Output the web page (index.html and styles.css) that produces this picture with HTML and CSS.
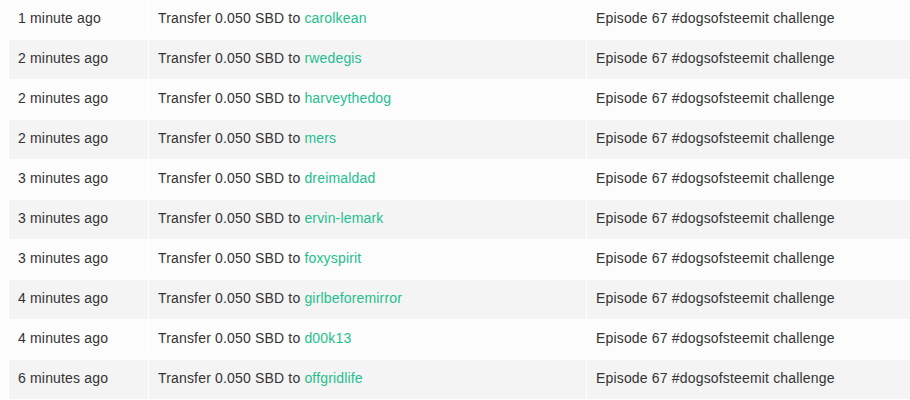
FILE: index.html
```html
<!DOCTYPE html>
<html lang="en">
<head>
    <meta charset="UTF-8">
    <title>Transfers</title>
    <link rel="stylesheet" href="styles.css">
</head>
<body>
    <table class="transfers">
        <tbody>
            <tr><td class="when">1 minute ago</td><td class="what">Transfer 0.050 SBD to <a href="#">carolkean</a></td><td class="memo">Episode 67 #dogsofsteemit challenge</td></tr>
            <tr><td class="when">2 minutes ago</td><td class="what">Transfer 0.050 SBD to <a href="#">rwedegis</a></td><td class="memo">Episode 67 #dogsofsteemit challenge</td></tr>
            <tr><td class="when">2 minutes ago</td><td class="what">Transfer 0.050 SBD to <a href="#">harveythedog</a></td><td class="memo">Episode 67 #dogsofsteemit challenge</td></tr>
            <tr><td class="when">2 minutes ago</td><td class="what">Transfer 0.050 SBD to <a href="#">mers</a></td><td class="memo">Episode 67 #dogsofsteemit challenge</td></tr>
            <tr><td class="when">3 minutes ago</td><td class="what">Transfer 0.050 SBD to <a href="#">dreimaldad</a></td><td class="memo">Episode 67 #dogsofsteemit challenge</td></tr>
            <tr><td class="when">3 minutes ago</td><td class="what">Transfer 0.050 SBD to <a href="#">ervin-lemark</a></td><td class="memo">Episode 67 #dogsofsteemit challenge</td></tr>
            <tr><td class="when">3 minutes ago</td><td class="what">Transfer 0.050 SBD to <a href="#">foxyspirit</a></td><td class="memo">Episode 67 #dogsofsteemit challenge</td></tr>
            <tr><td class="when">4 minutes ago</td><td class="what">Transfer 0.050 SBD to <a href="#">girlbeforemirror</a></td><td class="memo">Episode 67 #dogsofsteemit challenge</td></tr>
            <tr><td class="when">4 minutes ago</td><td class="what">Transfer 0.050 SBD to <a href="#">d00k13</a></td><td class="memo">Episode 67 #dogsofsteemit challenge</td></tr>
            <tr><td class="when">6 minutes ago</td><td class="what">Transfer 0.050 SBD to <a href="#">offgridlife</a></td><td class="memo">Episode 67 #dogsofsteemit challenge</td></tr>
        </tbody>
    </table>
</body>
</html>
```

FILE: styles.css
```css
body {
    margin: 0;
    background: #fcfcfc;
    font-family: 'Liberation Sans', Arial, sans-serif;
    font-size: 14px;
    letter-spacing: 0.17px;
    color: #333;
    overflow: hidden;
}
.transfers {
    margin-left: 8px;
    border-collapse: collapse;
    table-layout: fixed;
    width: 910px;
}
.transfers td {
    border-left: 1px solid #fff;
    border-bottom: 1px solid #fff;
    padding: 8px 9px 11px;
    line-height: 20px;
    white-space: nowrap;
}
.transfers tr:nth-child(even) {
    background: #f4f4f4;
}
.transfers .when {
    width: 121px;
}
.transfers .what {
    width: 419px;
}
.transfers a {
    color: #1fbf8f;
    text-decoration: none;
}
```
